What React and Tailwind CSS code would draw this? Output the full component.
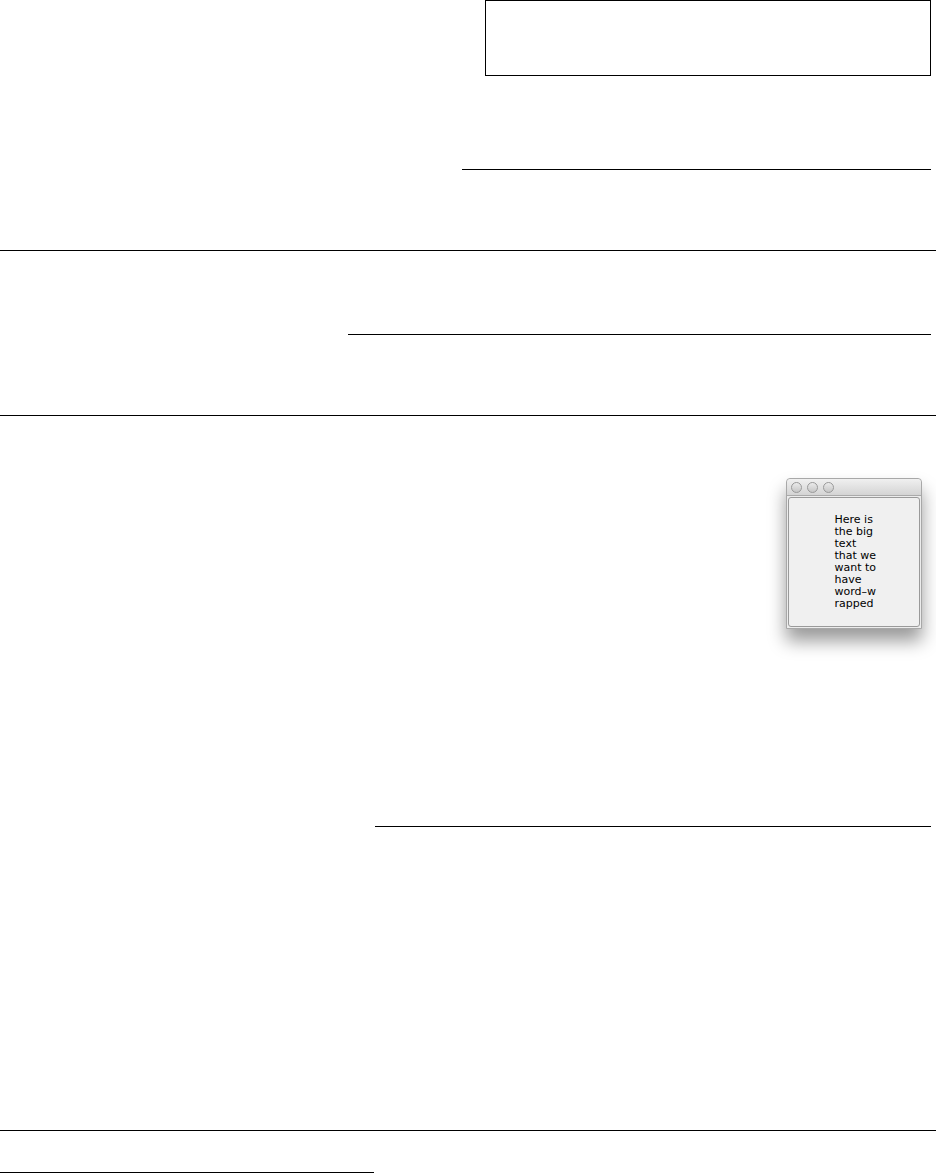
export default function App() {
  return (
    <div className="w-[936px] h-[1174px] bg-white overflow-hidden">
      <div className="ml-[485px] w-[446px] h-[76px] border border-black" />

      <div className="mt-[93px] ml-[462px] w-[469px] h-px bg-black" />
      <div className="mt-[80px] w-full h-px bg-black" />
      <div className="mt-[83px] ml-[348px] w-[583px] h-px bg-black" />
      <div className="mt-[80px] w-full h-px bg-black" />

      <div className="mt-[62px] ml-[786px] w-[136px] h-[151px] flex flex-col rounded-t-[4px] border border-[#a8a8a8] bg-[#ececec] shadow-[0_12px_18px_rgba(0,0,0,0.4)]">
        <div className="h-[17px] flex items-center gap-[5px] pl-[4px] rounded-t-[4px] bg-gradient-to-b from-[#f0f0f0] to-[#d4d4d4] border-b border-[#aaaaaa]">
          <span className="w-[11px] h-[11px] rounded-full border border-[#999999] bg-gradient-to-b from-[#ebebeb] to-[#c6c6c6]" />
          <span className="w-[11px] h-[11px] rounded-full border border-[#999999] bg-gradient-to-b from-[#ebebeb] to-[#c6c6c6]" />
          <span className="w-[11px] h-[11px] rounded-full border border-[#999999] bg-gradient-to-b from-[#ebebeb] to-[#c6c6c6]" />
        </div>
        <div className="flex-1 m-[1px] rounded-[3px] border border-[#9a9a9a] bg-[#f0f0f0] flex items-center justify-center">
          <p className="w-[40px] ml-[1px] text-[11px] leading-[12px] text-black font-['DejaVu_Sans',sans-serif] whitespace-nowrap">
            Here is<br />the big<br />text<br />that we<br />want to<br />have<br />word–w<br />rapped
          </p>
        </div>
      </div>

      <div className="mt-[197px] ml-[375px] w-[556px] h-px bg-black" />
      <div className="mt-[303px] w-full h-px bg-black" />
      <div className="mt-[41px] w-[374px] h-px bg-black" />
    </div>
  )
}
